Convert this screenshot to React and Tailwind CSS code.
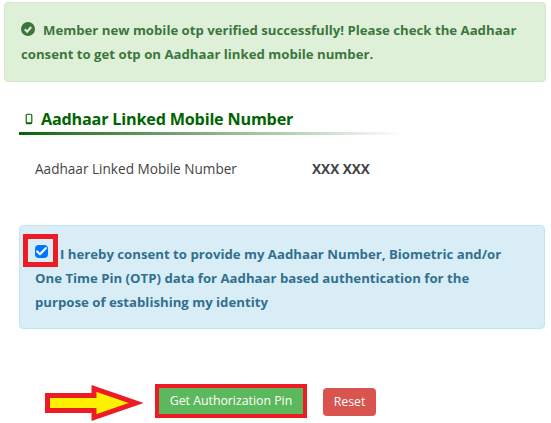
import { Check } from "lucide-react";

const font = { fontFamily: '"Open Sans", sans-serif' };

export default function App() {
  return (
    <div style={font} className="h-[423px] w-[551px] overflow-hidden bg-white pl-1 pr-[5px] pt-0.5 text-[13.6px] leading-6">
      <div className="h-[80px] rounded border border-[#d6e9c6] bg-[#dff0d8] pl-[16px] pr-3 pt-[15px] text-[13.2px] font-bold text-[#3c763d]">
        <svg viewBox="0 0 24 24" className="mr-[8px] inline-block h-[14px] w-[14px] align-[-1px]">
          <circle cx="12" cy="12" r="12" fill="#3c763d" />
          <path d="M6.5 12.5l4 4 7-8" fill="none" stroke="#dff0d8" strokeWidth="3.6" />
        </svg>
        Member new mobile otp verified successfully! Please check the Aadhaar consent to get otp on Aadhaar linked mobile number.
      </div>

      <div className="ml-[15px] mt-[24px] w-[384px]">
        <h3 className="flex h-[26px] items-center pl-[6px] text-[16.2px] font-bold tracking-[-0.2px] text-[#006400]">
          <svg viewBox="0 0 10 14" className="mr-[8px] h-[12px] w-[8px]">
            <rect x="1.5" y="1" width="7" height="12" rx="1.5" fill="none" stroke="#006400" strokeWidth="1.4" />
            <rect x="1.5" y="11" width="7" height="2" fill="#006400" />
          </svg>
          Aadhaar Linked Mobile Number
        </h3>
        <div className="h-[3px] bg-gradient-to-r from-[#006400] to-white"></div>
      </div>

      <div className="ml-[31px] mt-[22px] flex text-[#444444]">
        <span className="w-[277px]">Aadhaar Linked Mobile Number</span>
        <span className="font-bold">XXX XXX</span>
      </div>

      <div className="ml-[15px] mt-[44px] h-[104px] w-[526px] rounded border border-[#bce8f1] bg-[#d9edf7] pl-[15px] pr-[20px] pt-4 text-[13.2px] font-bold text-[#31708f]">
        <span className="relative mr-[12px] inline-block h-[13px] w-[13px] rounded-sm bg-[#0075ff] align-[1px] text-white">
          <Check className="absolute left-0 top-0 h-[13px] w-[13px]" strokeWidth={4} />
          <span className="absolute -left-[12px] -top-[11px] h-[33px] w-[35px] border-[5px] border-[#ed1c24]"></span>
        </span>
        I hereby consent to provide my Aadhaar Number, Biometric and/or One Time Pin (OTP) data for Aadhaar based authentication for the purpose of establishing my identity
      </div>

      <div className="ml-[40px] mt-[55px] flex items-start">
        <svg viewBox="0 0 100 38" className="h-[38px] w-[100px]">
          <path d="M3.5 11.5H50V4.5L92 19L50 33.5V26.5H3.5Z" fill="#fff200" stroke="#ed1c24" strokeWidth="5" />
        </svg>
        <div className="ml-[11px] border-4 border-[#ed1c24]">
          <button className="block h-[26px] w-[144px] bg-[#5cb85c] text-[12.3px] text-white">Get Authorization Pin</button>
        </div>
        <button className="ml-4 mt-1 h-[28px] w-[53px] rounded bg-[#d9534f] text-[12.3px] text-white">Reset</button>
      </div>
    </div>
  );
}
